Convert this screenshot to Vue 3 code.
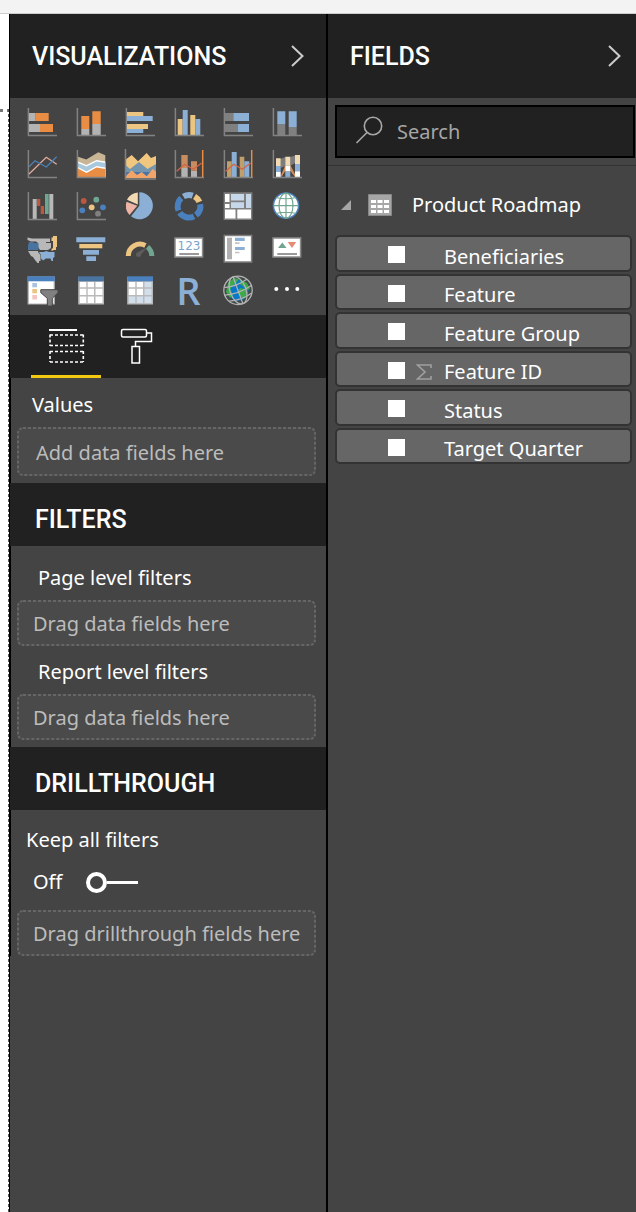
<script setup>
import { ref } from 'vue'

const search = ref('')
const keepAll = ref(false)
const activeTab = ref('fields')
const fields = ref([
  { name: 'Beneficiaries', numeric: false, checked: false },
  { name: 'Feature', numeric: false, checked: false },
  { name: 'Feature Group', numeric: false, checked: false },
  { name: 'Feature ID', numeric: true, checked: false },
  { name: 'Status', numeric: false, checked: false },
  { name: 'Target Quarter', numeric: false, checked: false }
])
</script>

<template>
  <div class="app">
    <div class="ribbon"></div>
    <div class="workspace">
      <div class="canvas"><div class="sheet"></div></div>

      <section class="pane visuals">
        <header class="pane-head">
          <h2>VISUALIZATIONS</h2>
          <button class="collapse" aria-label="Collapse visualizations">
            <svg width="16" height="24" viewBox="0 0 16 24"><path d="M2 2L12.500 12L2 22" /></svg>
          </button>
        </header>

        <div class="gallery">
          <button aria-label="Stacked bar chart"><svg viewBox="0 0 32 32">
            <path class="axis" d="M2.400 2V29.500H31" />
            <path fill="#b3b3b3" d="M3 7h6.700v8H3zM3 18h11v8H3z" /><path fill="#e88d43" d="M9.700 7h13v8h-13zM14 18h13v8H14z" />
          </svg></button>
          <button aria-label="Stacked column chart"><svg viewBox="0 0 32 32">
            <path fill="#b3b3b3" d="M6.300 23h8v6h-8zM17.300 18h8.400v11h-8.400z" /><path fill="#e88d43" d="M6.300 10h8v13h-8zM17.300 5.300h8.400V18h-8.400z" />
            <path class="axis" d="M2.400 2V29.500H31" />
          </svg></button>
          <button aria-label="Clustered bar chart"><svg viewBox="0 0 32 32">
            <path class="axis" d="M2.400 2V29.500H31" />
            <path fill="#ecc582" d="M3 6h16.300v4H3zM3 18h21v5H3z" /><path fill="#8bafd5" d="M3 10h25.700v5H3zM3 23h16.300v4H3z" />
          </svg></button>
          <button aria-label="Clustered column chart"><svg viewBox="0 0 32 32">
            <path fill="#ecc582" d="M4.700 13h5v16h-5zM17.300 9h5v20h-5z" /><path fill="#8bafd5" d="M9.700 4h5v25h-5zM22.300 13h5v16h-5z" />
            <path class="axis" d="M2.400 2V29.500H31" />
          </svg></button>
          <button aria-label="100% stacked bar chart"><svg viewBox="0 0 32 32">
            <path class="axis" d="M2.400 2V29.500H31" />
            <path fill="#808080" d="M3 7h8.300v8H3zM3 18h13v8H3z" /><path fill="#8bafd5" d="M11.300 7H27v8H11.300zM16 18h11v8H16z" />
          </svg></button>
          <button aria-label="100% stacked column chart"><svg viewBox="0 0 32 32">
            <path fill="#808080" d="M6.300 18h8v11h-8zM17.700 21h8v8h-8z" /><path fill="#8bafd5" d="M6.300 5.300h8V18h-8zM17.700 5.300h8V21h-8z" />
            <path class="axis" d="M2.400 2V29.500H31" />
          </svg></button>

          <button aria-label="Line chart"><svg viewBox="0 0 32 32">
            <path class="axis" d="M2.400 2V29.500H31" />
            <path fill="none" stroke="#e5ab9b" stroke-width="1.300" d="M3 26L20.300 9.300L30.700 16.300" />
            <path fill="none" stroke="#4c80b8" stroke-width="1.300" d="M3 18.700L9 12.700L20.300 19L30.700 8.700" />
          </svg></button>
          <button aria-label="Area chart"><svg viewBox="0 0 32 32">
            <path fill="#c7b595" d="M3 8.700L11.300 11.500L23.300 4.300L30.300 7.300V29H3z" />
            <path fill="#fff" d="M3 13.500L11.500 17L21.500 12L30.300 13.500V29H3z" />
            <path fill="#a7c8dd" d="M3 15L11.500 18.500L21.500 13.500L30.300 15V29H3z" />
            <path fill="#fff" d="M3 19L11.500 23.500L21.500 18L30.300 19.500V29H3z" />
            <path fill="#e88d43" d="M3 20.500L11.500 25L21.500 19.500L30.300 21V29H3z" />
            <path class="axis" d="M2.400 2V29.500H31" />
          </svg></button>
          <button aria-label="Stacked area chart"><svg viewBox="0 0 32 32">
            <path fill="#f1c780" d="M2 11.300L7.700 7L14 13.300L22.700 5L27 10L32 8V30H2z" />
            <path fill="#7395ae" d="M2 17.500L6 21L15 14L23.500 21L32 16V30H2z" />
            <path fill="#4b73a3" d="M2 24H32V30H2z" />
            <path fill="#f3a469" d="M2 28L7.700 22.300L13 27L17.700 24L22.700 28.300L29 20.700L32 24V30H2z" />
            <path class="axis" d="M1.500 1V31H32" />
          </svg></button>
          <button aria-label="Line and stacked column chart"><svg viewBox="0 0 32 32">
            <path fill="#b3b3b3" d="M8.300 20h6.400v9H8.300zM18 22.700h6V29h-6z" /><path fill="#c78c60" d="M8.300 7h6.400v13H8.300zM18 13.300h6v9.400h-6z" />
            <path class="axis" d="M2.400 2V29.500H31" /><path fill="none" stroke="#e88d43" stroke-width="1.500" d="M29.700 2V29" />
            <path fill="none" stroke="#d36547" stroke-width="1.300" d="M3.700 23.300L11.700 16.300L20.300 21.300L28.700 15" />
          </svg></button>
          <button aria-label="Line and clustered column chart"><svg viewBox="0 0 32 32">
            <path fill="#bfa06c" d="M5 13.300h4.700V29H5zM17.700 8.700h4.600V29h-4.600z" /><path fill="#8bafd5" d="M9.700 4h5v25h-5zM22.300 13.300h5V29h-5z" />
            <path class="axis" d="M2.400 2V29.500H31" /><path fill="none" stroke="#e88d43" stroke-width="1.500" d="M29.700 2V29" />
            <path fill="none" stroke="#d36547" stroke-width="1.300" d="M3.700 23.300L11.700 16.300L20.300 21.300L28.700 15" />
          </svg></button>
          <button aria-label="Ribbon chart"><svg viewBox="0 0 32 32">
            <path fill="#7d7d7d" d="M9.700 11L14.300 9V18L9.700 20zM19.300 9L24 7.500V15L19.300 18z" />
            <path fill="#d18a55" d="M9.700 28L14.300 17V23L10.500 29zM19.300 17L24 26V29L19.300 23z" />
            <path fill="#f1dab4" d="M5 10.300h4.700V18H5zM14.300 8.700h5v9h-5zM24 7h5v9h-5z" />
            <path fill="#8bafd5" d="M5 18h4.700v6H5zM14.300 23.300h5V29h-5zM24 16h5v7.300h-5z" />
            <path fill="#fff" d="M5 24h4.700v5H5zM14.300 17.700h5v5.600h-5zM24 23.300h5V29h-5z" />
            <path class="axis" d="M2.400 2V29.500H31" />
          </svg></button>

          <button aria-label="Waterfall chart"><svg viewBox="0 0 32 32">
            <path fill="#b8b8b8" d="M6.700 9h4v20h-4zM23.300 4h4v25h-4z" /><path fill="#bd583e" d="M11 9h3.300v7H11zM14.700 16H18v8h-3.300z" />
            <path fill="#70a590" d="M19 4h3.700v20H19z" /><path class="axis" d="M2.400 2V29.500H31" />
          </svg></button>
          <button aria-label="Scatter chart"><svg viewBox="0 0 32 32">
            <path class="axis" d="M2.400 2V29.500H31" />
            <circle cx="8.700" cy="11" r="2.900" fill="#bd583e" /><circle cx="21.300" cy="9.700" r="2.900" fill="#70a590" />
            <circle cx="7.300" cy="20.300" r="2.900" fill="#4a80bd" /><circle cx="16.700" cy="17.300" r="2.900" fill="#ecc582" />
            <circle cx="28" cy="17.300" r="2.900" fill="#4a80bd" /><circle cx="23" cy="23.700" r="2.900" fill="#808080" />
          </svg></button>
          <button aria-label="Pie chart"><svg viewBox="0 0 32 32">
            <path fill="#8bafd5" d="M15.300 15.700V2.200A13.500 13.500 0 1 1 7 26.300z" />
            <path fill="#edb3a5" d="M13.300 15.800L5.500 25A13.500 13.500 0 0 1 2.500 11.800z" />
            <path fill="#f1dab4" d="M13.800 14.500L3 9.800A13 13 0 0 1 13.800 2.400z" />
          </svg></button>
          <button aria-label="Donut chart"><svg viewBox="0 0 32 32">
            <g fill="none" stroke-width="6" transform="translate(16 16.300)">
              <path stroke="#8bafd5" d="M-5.600 -9.800A11.300 11.300 0 0 1 3.700 -10.700" />
              <path stroke="#ecc582" d="M5.600 -9.800A11.300 11.300 0 0 1 10.400 -4.400" />
              <path stroke="#4a80bd" d="M11.200 -2A11.300 11.300 0 0 1 7 8.900" />
              <path stroke="#4a80bd" d="M5 10.100A11.300 11.300 0 0 1 -9.300 6.500" />
              <path stroke="#4a80bd" d="M-10.500 4.200A11.300 11.300 0 0 1 -7.700 -8.300" />
            </g>
          </svg></button>
          <button aria-label="Treemap"><svg viewBox="0 0 32 32">
            <path fill="#808080" d="M1.600 2.300h28.800V30H1.600z" /><path fill="#fff" d="M3 4h4.500v8H3zM3 14h4.500v4H3zM3 19.500h10.500v9H3zM15.300 19.500H29v9H15.300z" />
            <path fill="#c6d7e9" d="M9 4h13v6.500H9zM9 12.200h13V18H9zM24 4h5v14h-5z" />
          </svg></button>
          <button aria-label="Map"><svg viewBox="0 0 32 32">
            <circle cx="15" cy="15.600" r="12.600" fill="#fff" stroke="#4a80bd" stroke-width="1.500" />
            <g fill="none" stroke="#70a590" stroke-width="1.200"><ellipse cx="15" cy="15.600" rx="7" ry="12.500" /><path d="M15 3V28M2.500 15.600H27.500M5 7.500Q15 10 25 7.500M5 23.500Q15 21 25 23.500" /></g>
          </svg></button>

          <button aria-label="Filled map"><svg viewBox="0 0 32 32">
            <path fill="#b8b8b8" d="M1.500 5.500L6 6.500H24V10H20V11H25V16L22 18H14L12 15V11L10 9.500H5L1.500 8z" />
            <path fill="#4a74a0" d="M3 10H7L8 11H12.500V18H2V14z" />
            <path fill="#b8b8b8" d="M2 19H12V20L14.500 23V29H13V31H11.500L9 28L7 25L5 24z" />
            <path fill="#ecc582" d="M27 4H31V15H30V18H28L25.500 19V17L27 16V9H25.500V5.500H27z" />
            <path fill="#8bafd5" d="M13 20H18L20 19L23 20H28.500V25L27 26V29H25.500L24.500 26.500H20L17 28.500L15 26.500V23z" />
          </svg></button>
          <button aria-label="Funnel"><svg viewBox="0 0 32 32">
            <path fill="#8bafd5" d="M1.300 5.300h29v5h-29zM8 18h16v4.700H8zM11.300 24.300H21V29h-9.700z" /><path fill="#ecc582" d="M4.300 12h23v4.300h-23z" />
          </svg></button>
          <button aria-label="Gauge"><svg viewBox="0 0 32 32">
            <g fill="none" stroke-width="5"><path stroke="#ecc582" d="M4.300 24A11.800 11.800 0 0 1 21.400 13.400" /><path stroke="#70a590" d="M23.500 14.900A11.800 11.800 0 0 1 27.800 24" /></g>
            <path fill="#5e5e5e" d="M12 22.500a2.500 2.500 0 0 1 2.300-2.500L23.300 15.300 17 22.500a2.500 2.500 0 0 1-5 0z" />
          </svg></button>
          <button aria-label="Card"><svg viewBox="0 0 32 32">
            <path fill="#fff" stroke="#8a8a8a" stroke-width="1.500" d="M2 6h27.600v19H2z" />
            <text x="16" y="18" text-anchor="middle" font-family="DejaVu Sans, sans-serif" font-size="12" fill="#7ea3cb">123</text>
            <path stroke="#777" stroke-width="1.500" d="M6.300 22H26" />
          </svg></button>
          <button aria-label="Multi-row card"><svg viewBox="0 0 32 32">
            <path fill="#fff" stroke="#808080" stroke-width="1.500" d="M2.300 3.400h27.300V30H2.300z" />
            <path fill="#b0b0b0" d="M5 5.700h5v21.600H5z" /><path fill="#8bafd5" d="M13 5.700h9.700V9H13zM13 15h9.700v3H13z" />
            <path fill="#c4c4c4" d="M13 10.300h4.500V12H13zM13 19.700h4.500v1.600H13z" />
          </svg></button>
          <button aria-label="KPI"><svg viewBox="0 0 32 32">
            <path fill="#fff" stroke="#8a8a8a" stroke-width="1.500" d="M2 6h27.600v19H2z" />
            <path fill="#70a590" d="M7 16L11.300 10.500L15.500 16z" /><path fill="#e68a73" d="M16.700 10H25.200L21 16z" /><path stroke="#777" stroke-width="1.500" d="M6.300 22H26" />
          </svg></button>

          <button aria-label="Slicer"><svg viewBox="0 0 32 32">
            <path fill="#fff" stroke="#b5b5b5" stroke-width="1.200" d="M2.200 3h26v27h-26z" /><path fill="#4a80bd" d="M1.600 2.300h27.200v5H1.600z" />
            <path fill="#a9c2e0" d="M6.300 9H11v4.300H6.300z" /><path fill="#ecc582" d="M6.300 15H11v4.300H6.300z" /><path fill="#f2c6be" d="M6.300 21H11v4.500H6.300z" />
            <path fill="#808080" stroke="#444" d="M14.800 15.700H32v3l-5.700 5.600V32h-5v-7.700l-6.500-5.600z" />
          </svg></button>
          <button aria-label="Table"><svg viewBox="0 0 32 32">
            <path fill="#b9b9b9" d="M3.200 3H29v27.500H3.200z" /><path fill="#4a74a0" d="M3.200 2.300H29v5H3.200z" />
            <path fill="#fff" d="M4.800 8h6.500v5.300H4.800zM12.700 8H19v5.300h-6.300zM20.500 8H27.500v5.300h-7zM4.800 14.700h6.500V21H4.800zM12.700 14.700H19V21h-6.300zM20.500 14.700h7V21h-7zM4.800 22.400h6.500V29H4.800zM12.700 22.400H19V29h-6.300zM20.500 22.400h7V29h-7z" />
          </svg></button>
          <button aria-label="Matrix"><svg viewBox="0 0 32 32">
            <path fill="#b9b9b9" d="M3.200 3H29v27.500H3.200z" /><path fill="#4a80bd" d="M3.200 2.300H29v5H3.200z" />
            <path fill="#fff" d="M4.800 8h6.500v5.300H4.800zM12.700 8H19v5.300h-6.300zM4.800 14.700h6.500V21H4.800zM12.700 14.700H19V21h-6.300z" />
            <path fill="#d1dfed" d="M20.500 8H27.500v5.300h-7zM20.500 14.700h7V21h-7zM4.800 22.400h6.500V29H4.800zM12.700 22.400H19V29h-6.300zM20.500 22.400h7V29h-7z" />
          </svg></button>
          <button class="r-logo" aria-label="R script visual">R</button>
          <button aria-label="ArcGIS map"><svg viewBox="0 0 32 32">
            <circle cx="16" cy="16.300" r="14" fill="#404a48" /><circle cx="16" cy="16.300" r="10.500" fill="#0a78c8" />
            <path fill="#3daa4a" d="M6 9l6-5 5 1-3 4-4 3-2 4 3 4-3 4-4-6zM19 6l6 3 3 6-3 1-3-3-4-3zM18 14l5 1 2 4-3 6-4-3-3-4z" />
            <g fill="none" stroke="#b3b3b3" stroke-width="1.300"><circle cx="16" cy="16.300" r="14.200" /><g transform="rotate(-20 16 16.300)"><ellipse cx="16" cy="16.300" rx="8" ry="14.200" /><path d="M16 2V30.500M1.800 16.300Q16 20 30.200 16.300M4 9Q16 12.500 28 9M4 23.500Q16 27 28 23.500" /></g></g>
          </svg></button>
          <button aria-label="More visuals"><svg viewBox="0 0 32 32">
            <g fill="#fff"><circle cx="5.300" cy="15" r="2" /><circle cx="16" cy="15" r="2" /><circle cx="26.300" cy="15" r="2" /></g>
          </svg></button>
        </div>

        <div class="tabs" role="tablist">
          <button role="tab" aria-label="Fields" :class="{ active: activeTab === 'fields' }" @click="activeTab = 'fields'">
            <svg width="36" height="36" viewBox="0 0 36 36" fill="none" stroke="#fff">
              <path stroke-width="2" d="M0 2H28" />
              <path stroke-width="1.600" stroke-dasharray="3 2" d="M1 7H35M1 17.500H35M1 23.500H35M1 34H35" />
              <path stroke-width="1.600" stroke-dasharray="3 2" d="M1 6.500V18M34.300 6.500V18M1 23V34M34.300 23V34" />
            </svg>
          </button>
          <button role="tab" aria-label="Format" :class="{ active: activeTab === 'format' }" @click="activeTab = 'format'">
            <svg width="36" height="36" viewBox="0 0 36 36" fill="none" stroke="#fff" stroke-width="1.500">
              <rect x="2.500" y="1.500" width="25" height="7.500" rx="1.500" />
              <path d="M27.500 5H32.500V13.500H16.500V18.500" /><rect x="13" y="18.500" width="7.500" height="16.500" />
            </svg>
          </button>
        </div>

        <div class="section values">
          <h3>Values</h3>
          <div class="drop"><svg><rect width="100%" height="100%" rx="6" /></svg>Add data fields here</div>
        </div>

        <h2 class="band">FILTERS</h2>
        <div class="section filters">
          <h3>Page level filters</h3>
          <div class="drop"><svg><rect width="100%" height="100%" rx="6" /></svg>Drag data fields here</div>
          <h3>Report level filters</h3>
          <div class="drop"><svg><rect width="100%" height="100%" rx="6" /></svg>Drag data fields here</div>
        </div>

        <h2 class="band">DRILLTHROUGH</h2>
        <div class="section drill">
          <label for="keep">Keep all filters</label>
          <div class="switch">
            <span>{{ keepAll ? 'On' : 'Off' }}</span>
            <input id="keep" v-model="keepAll" type="checkbox" role="switch" />
          </div>
          <div class="drop"><svg><rect width="100%" height="100%" rx="6" /></svg>Drag drillthrough fields here</div>
        </div>
      </section>

      <section class="pane fields">
        <header class="pane-head">
          <h2>FIELDS</h2>
          <button class="collapse" aria-label="Collapse fields">
            <svg width="16" height="24" viewBox="0 0 16 24"><path d="M2 2L12.500 12L2 22" /></svg>
          </button>
        </header>
        <div class="search-wrap">
          <label class="search">
            <svg width="28" height="28" viewBox="0 0 28 28" fill="none" stroke="#a8a8a8" stroke-width="1.600"><circle cx="18" cy="10" r="8.700" /><path d="M12 16.500L1.500 27" /></svg>
            <input v-model="search" type="text" placeholder="Search" aria-label="Search" />
          </label>
        </div>
        <button class="table-row">
          <svg class="caret" width="12" height="12" viewBox="0 0 12 12"><path fill="#a6a6a6" d="M11 1V11H1z" /></svg>
          <svg class="grid-icon" width="24" height="22" viewBox="0 0 24 22">
            <path fill="#a6a6a6" stroke="#888" d="M.5.500H23.500V21.500H.5z" />
            <path fill="#fff" d="M3 6h5v3H3zM9.500 6h5v3h-5zM16 6h5v3h-5zM3 11h5v3H3zM9.500 11h5v3h-5zM16 11h5v3h-5zM3 16h5v3H3zM9.500 16h5v3h-5zM16 16h5v3h-5z" />
          </svg>
          <span>Product Roadmap</span>
        </button>
        <ul class="field-list">
          <li v-for="f in fields" :key="f.name">
            <label>
              <input v-model="f.checked" type="checkbox" />
              <span class="kind">
                <svg v-if="f.numeric" width="16" height="16" viewBox="0 0 16 16" fill="none" stroke="#a0a0a0"><path stroke-width="1.600" d="M15 4V1H1.500L9 8L1.500 15H15V12" /></svg>
              </span>
              <span>{{ f.name }}</span>
            </label>
          </li>
        </ul>
      </section>
    </div>
  </div>
</template>

<style>
body {
  background: #fff;
}
</style>

<style scoped>
.app {
  min-height: 100vh;
  display: flex;
  flex-direction: column;
  font-family: "Noto Sans", "Open Sans", sans-serif;
  font-size: 20px;
  line-height: 28px;
  color: #fff;
}
* { box-sizing: border-box; }
h2, h3, ul { margin: 0; padding: 0; font-weight: 400; }
h3 { font-size: 20px; }
h2 {
  font-family: Roboto, sans-serif;
  font-size: 25px;
  font-weight: 500;
}
button {
  border: 0;
  padding: 0;
  background: none;
  color: inherit;
  font: inherit;
  cursor: pointer;
}
svg { display: block; }
.ribbon {
  height: 14px;
  background: #f3f3f3;
  border-bottom: 1px solid #cdcdcd;
}
.workspace { flex: 1; display: flex; }
.canvas {
  flex: 0 0 9px;
  display: flex;
  padding-top: 95px;
  background: #fff;
}
.sheet {
  flex: 1;
  border-right: 1px dashed #555;
  background: repeating-linear-gradient(90deg, #777 0 3px, transparent 3px 7px) 0 0 / 100% 3px no-repeat;
}
.pane { min-width: 0; background: #444; }
.visuals {
  flex: 318;
  border-left: 1px solid #000;
  border-right: 2px solid #000;
}
.fields { flex: 310; }
.pane-head {
  height: 84px;
  display: flex;
  align-items: center;
  justify-content: space-between;
  padding: 0 20px 0 22px;
  background: #212121;
}
.pane-head h2 { padding-top: 2px; }
.fields .pane-head { padding: 0 13px 0 22px; }
.collapse svg { fill: none; stroke: #ccc; stroke-width: 2; }
.gallery {
  display: grid;
  grid-template-columns: repeat(6, 49px);
  grid-auto-rows: 42px;
  padding: 3px 0 4px 7px;
}
.gallery button { display: grid; place-items: center; }
.gallery svg { width: 32px; height: 32px; }
.gallery .r-logo {
  font-family: "Open Sans", sans-serif;
  font-size: 38px;
  font-weight: 600;
  line-height: 42px;
  color: #8bafd5;
}
.axis { fill: none; stroke: #828282; stroke-width: 1.5; }
.tabs {
  height: 63px;
  display: flex;
  padding-left: 21px;
  background: #212121;
}
.tabs button {
  width: 70px;
  display: flex;
  justify-content: center;
  padding: 13px 0 0 2px;
  border-bottom: 3px solid transparent;
}
.tabs .active { border-color: #f2c811; }
.section { border-left: 1px solid #000; }
.drop {
  position: relative;
  height: 46px;
  display: flex;
  align-items: center;
  margin: 0 10px 0 6px;
  padding: 2px 0 0 16px;
  border-radius: 6px;
  background: #4a4a4a;
  color: #bcbcbc;
  overflow: hidden;
}
.drop svg {
  position: absolute;
  inset: 0;
  width: 100%;
  height: 100%;
  fill: none;
  stroke: #666;
  stroke-width: 4;
  stroke-dasharray: 3 2;
}
.values { padding: 13px 0 7px; }
.values h3 { padding-left: 21px; margin-bottom: 8px; }
.values .drop { height: 49px; padding-left: 19px; }
.band {
  height: 63px;
  display: flex;
  align-items: center;
  padding: 11px 0 0 25px;
  background: #212121;
}
.filters { padding: 18px 0 7px; }
.filters h3 { padding-left: 27px; margin-bottom: 8px; }
.filters .drop + h3 { margin-top: 12px; }
.drill { padding-top: 16px; }
.drill label { display: block; padding-left: 15px; }
.switch {
  display: flex;
  align-items: center;
  gap: 24px;
  margin: 14px 0;
  padding-left: 22px;
}
.switch input {
  appearance: none;
  width: 52px;
  height: 22px;
  margin: 0;
  display: flex;
  align-items: center;
}
.switch input::before {
  content: "";
  box-sizing: border-box;
  width: 21px;
  height: 21px;
  border: 4px solid #fff;
  border-radius: 50%;
}
.switch input::after {
  content: "";
  flex: 1;
  height: 3px;
  background: #fff;
}
.switch input:checked { flex-direction: row-reverse; }
.search-wrap {
  padding: 7px 1px 7px 7px;
  border-bottom: 1px solid #333;
}
.search {
  height: 53px;
  display: flex;
  align-items: center;
  gap: 14px;
  padding-left: 18px;
  border: 2px solid #000;
  background: #212121;
}
.search svg { flex: none; margin-bottom: 3px; }
.search input {
  flex: 1;
  min-width: 0;
  border: 0;
  padding: 0;
  outline: 0;
  background: none;
  color: #fff;
  font: inherit;
}
.search input::placeholder { color: #a6a6a6; opacity: 1; }
.table-row {
  width: 100%;
  height: 69px;
  display: flex;
  align-items: center;
  padding: 8px 0 0 12px;
}
.caret { margin-right: 16px; }
.grid-icon { margin-right: 20px; }
.field-list {
  display: flex;
  flex-direction: column;
  gap: 2px;
  margin: 0 4px 0 7px;
  list-style: none;
}
li {
  height: 37px;
  border: 2px solid #333;
  border-radius: 5px;
  background: #666;
}
li:nth-child(even) { height: 36px; }
li label {
  height: 100%;
  display: flex;
  align-items: center;
  padding: 6px 0 0 51px;
}
li input {
  appearance: none;
  flex: none;
  width: 17px;
  height: 17px;
  margin: 0 11px 4px 0;
  background: #fff;
}
li input:checked { background: #f2c811; }
.kind { flex: 0 0 28px; }
</style>
